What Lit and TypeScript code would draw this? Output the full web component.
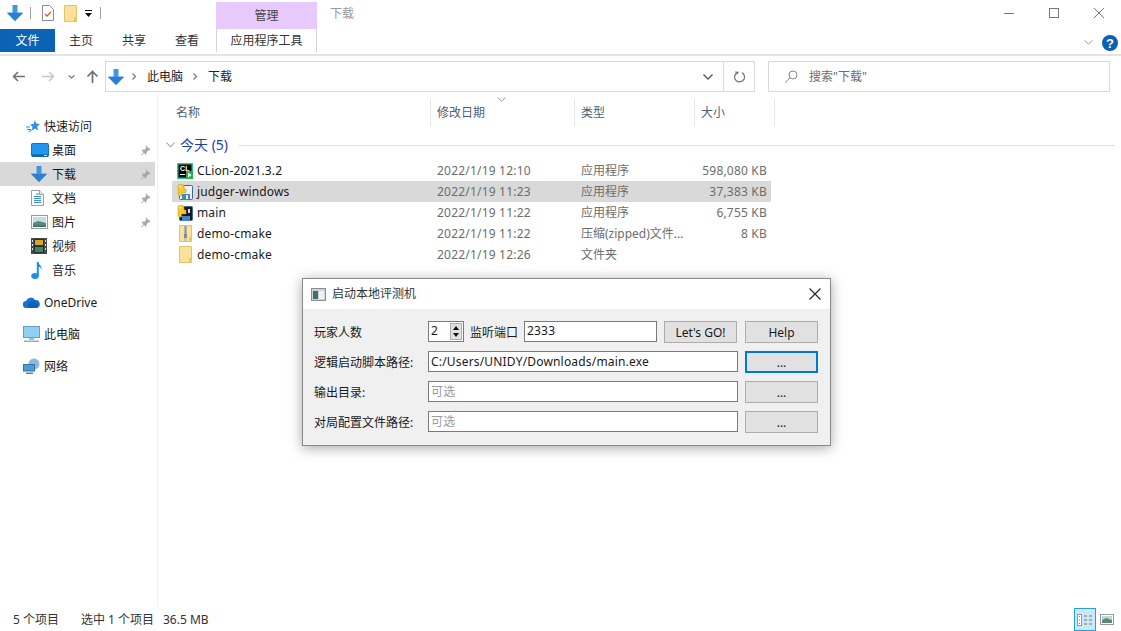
import { LitElement, html, css, svg } from "lit";
import { customElement } from "lit/decorators.js";

const ic = (w: number, h: number, body: unknown, cls = "") =>
  html`<svg class="ic ${cls}" width=${w} height=${h} viewBox="0 0 ${w} ${h}">${body}</svg>`;

const dlArrow = (w = 16, h = 16) => html`<svg class="ic" width=${w} height=${h} viewBox="0 0 16 16"><path d="M5.500 0h5v7.500H16L8 16 0 7.500h5.500z" fill="#3d97e6"/><path d="M8 8h8L8 16 0 8z" fill="#2a7fd0"/></svg>`;
const folder = (zip = false) => ic(13, 17, svg`
  <path d="M.5.5h12v16H.5z" fill="#fbe29a" stroke="#e3c368"/>
  <path d="M10 16v-4h2.500v4z" fill="#f3c64f"/>
  ${zip ? svg`<path d="M5 1h3v15H5z" fill="#c9c9c0"/><path d="M5.500 2h2M5.500 4h2M5.500 6h2M5.500 8h2" stroke="#6e6e68"/><rect x="5" y="9" width="3" height="4" fill="#8b8b84"/>` : ""}`);
const pyBadge = svg`<path d="M1 2a1.500 1.500 0 0 1 1.500-1.500h3A1.500 1.500 0 0 1 7 2v3h2v4H4.500v3H2.500A1.500 1.500 0 0 1 1 10.500z" fill="#f4c92f" stroke="#c89a10" stroke-width=".5"/><circle cx="3" cy="2.800" r=".8" fill="#fff"/>`;
const pin = ic(10, 11, svg`<path d="M4.500 0l5 4.500-1 1-1-.3-2 2 .2 1.600-1 1L3 8 .5 10.500 0 10l2.400-2.600L.8 5.600l1-1 1.600.2 2-2-.4-1z" fill="#a5a9ad"/>`);

const navItems = [
  ["桌面", ic(18, 14, svg`<rect x=".5" y=".5" width="17" height="13" rx="1" fill="#2196ee" stroke="#1670b8"/><path d="M1 11.500h16v2H1z" fill="#0f5d9c"/><path d="M13 12h3v1h-3z" fill="#cfe8fa"/>`), true],
  ["下载", dlArrow(16, 16), true],
  ["文档", ic(13, 16, svg`<path d="M.5.5h8l4 4v11H.5z" fill="#fff" stroke="#9aa0a6"/><path d="M8.500.5v4h4" fill="#e6e9ec" stroke="#9aa0a6"/><path d="M5 4h3M3 6.500h7M3 8.500h7M3 10.500h7M3 12.500h7" stroke="#3f8fd0"/>`), true],
  ["图片", ic(17, 14, svg`<rect x=".5" y=".5" width="16" height="13" fill="#fff" stroke="#9a9a9a"/><rect x="2" y="2" width="13" height="10" fill="#c3dcea"/><path d="M2 8l5-2 8 2v4H2z" fill="#5d8a72"/><path d="M2 10.500h13V12H2z" fill="#3c6e78"/>`), true],
  ["视频", ic(16, 16, svg`<rect width="16" height="16" fill="#43494f"/><rect x="3" y="1" width="10" height="14" fill="#24303a"/><rect x="4" y="2" width="8" height="5" fill="#d9a820"/><rect x="4" y="9" width="8" height="5" fill="#3d8a57"/><path d="M1 2h1v2H1zM1 6h1v2H1zM1 10h1v2H1zM14 2h1v2h-1zM14 6h1v2h-1zM14 10h1v2h-1z" fill="#ddd"/>`), false],
  ["音乐", ic(11, 17, svg`<ellipse cx="4" cy="14" rx="3.800" ry="3" fill="#1f8fe6"/><path d="M5.800 14V0h1.800c.4 3 3.400 3.600 3.200 8-.8-2.400-2-3-3-3.200V14z" fill="#1f8fe6"/>`), false],
] as const;

const files = [
  { name: "CLion-2021.3.2", date: "2022/1/19 12:10", type: "应用程序", size: "598,080 KB", selected: false, icon: ic(16, 16, svg`<rect width="16" height="16" fill="#1fcf8a"/><rect x="1.500" y="1.500" width="13" height="13" fill="#000"/><path d="M3 11h5v1H3z" fill="#fff"/><text x="3" y="8" font-size="7" font-family="Liberation Sans" font-weight="700" fill="#fff">CL</text><path d="M9 8h7v8H9z" fill="#22b14c"/><path d="M11 9.500l3.500 2.500-3.500 2.500z" fill="#fff"/>`) },
  { name: "judger-windows", date: "2022/1/19 11:23", type: "应用程序", size: "37,383 KB", selected: true, icon: ic(16, 16, svg`<rect x="2.500" y="1.500" width="13" height="14" rx="1" fill="#eef2f6" stroke="#3d6a94"/><rect x="5" y="10" width="8" height="6" fill="#3f86c4"/><rect x="9" y="11" width="2" height="4" fill="#eef2f6"/>${pyBadge}`) },
  { name: "main", date: "2022/1/19 11:22", type: "应用程序", size: "6,755 KB", selected: false, icon: ic(16, 16, svg`<rect x="2.500" y="1.500" width="13" height="14" rx="1" fill="#131a24" stroke="#3d6a94"/><rect x="5" y="11" width="8" height="5" fill="#3f86c4"/><path d="M11 4h2v4h-2z" fill="#ddd"/>${pyBadge}`) },
  { name: "demo-cmake", date: "2022/1/19 11:22", type: "压缩(zipped)文件...", size: "8 KB", selected: false, icon: folder(true) },
  { name: "demo-cmake", date: "2022/1/19 12:26", type: "文件夹", size: "", selected: false, icon: folder() },
];

@customElement("app-root")
export class AppRoot extends LitElement {
  static styles = css`
    :host { display: flex; flex-direction: column; position: relative; width: 1121px; height: 631px; overflow: hidden; background: #fff;
      font: 12px/16px "Noto Sans", "Noto Sans CJK SC", sans-serif; color: #1a1a1a; }
    .ic { display: block; flex: none; }
    .title { height: 29px; display: flex; align-items: stretch; flex: none; }
    .qat { width: 216px; flex: none; display: flex; align-items: center; padding: 0 0 3px 7px; box-sizing: border-box; }
    .qsep { width: 1px; height: 12px; background: #a0a0a0; }
    .manage { width: 101px; margin-top: 2px; background: #e8c9fb; display: flex; align-items: center; justify-content: center; color: #444; }
    .wintitle { flex: 1; padding: 6px 0 0 13px; color: #9a9a9a; }
    .winbtns { display: flex; gap: 35px; padding: 8px 17px 0 0; }
    .ribbon { height: 27px; flex: none; display: flex; border-bottom: 2px solid #e4e4e4; align-items: flex-start; box-sizing: border-box; }
    .filetab { width: 55px; height: 23px; padding-top: 1px; box-sizing: border-box; background: #0a63b4; color: #fff; display: flex; align-items: center; justify-content: center; }
    .tab { display: flex; align-items: center; height: 23px; width: 53px; padding: 1px 0 0 14px; box-sizing: border-box; color: #333; }
    .apptab { width: 101px; height: 23px; margin-left: 2px; padding-top: 1px; border: solid #d4d4d4; border-width: 0 1px; box-sizing: border-box; display: flex; align-items: center; justify-content: center; color: #333; }
    .rspace { flex: 1; }
    .rright { display: flex; align-items: center; gap: 9px; height: 24px; padding: 3px 3px 0 0; box-sizing: border-box; }
    .addr { height: 39px; flex: none; display: flex; align-items: flex-start; padding: 5px 11px 0 12px; box-sizing: border-box; }
    .nav { width: 93px; height: 31px; flex: none; display: flex; align-items: center; }
    .abox { width: 650px; flex: none; height: 31px; border: 1px solid #d9d9d9; box-sizing: border-box; display: flex; align-items: center; padding-left: 2px; color: #222; }
    .crumb1 { margin: 0 10px; }
    .crumb2 { margin-left: 10px; }
    .aspace { flex: 1; }
    .achev { width: 30px; display: flex; justify-content: center; }
    .arefresh { width: 30px; align-self: stretch; border-left: 1px solid #d9d9d9; display: flex; align-items: center; justify-content: center; }
    .search { margin-left: 13px; flex: 1; height: 31px; border: 1px solid #d9d9d9; box-sizing: border-box; display: flex; align-items: center; padding-left: 15px; gap: 11px; color: #6d6d6d; }
    .body { flex: 1; display: flex; min-height: 0; }
    .side { width: 158px; flex: none; border-right: 1px solid #f2f2f2; box-sizing: border-box; padding-top: 19px; display: flex; flex-direction: column; }
    .sitem { height: 24px; width: 155px; display: flex; align-items: center; flex: none; position: relative; }
    .sitem span { padding-top: 2px; }
    .sitem.sel { background: #d9d9d9; }
    .sitem.top { padding-left: 26px; box-sizing: border-box; gap: 4px; }
    .sitem.group { margin-top: 8px; padding-left: 23px; box-sizing: border-box; gap: 4px; }
    .sitem.child { padding-left: 31px; box-sizing: border-box; }
    .sico { width: 21px; flex: none; display: flex; justify-content: flex-start; }
    .spin { position: absolute; right: 4px; top: 7px; }
    .main { flex: 1; min-width: 0; display: flex; flex-direction: column; }
    .cols { display: grid; grid-template-columns: 273px 144px 120px 80px; width: 617px; height: 27px; margin-top: 4px; flex: none; color: #4c607a; }
    .col { border-right: 1px solid #e5e5e5; padding: 6px 0 0 6px; position: relative; }
    .col:first-child { padding-left: 18px; }
    .sort { position: absolute; left: 66px; top: -2px; }
    .ghead { display: flex; align-items: center; height: 20px; margin: 9px 6px 0 8px; gap: 5px; color: #1e3f9f; font-size: 14px; flex: none; }
    .gline { flex: 1; height: 1px; background: #e2e2e2; margin-left: 5px; }
    .rows { margin: 5px 0 0 14px; width: 599px; display: flex; flex-direction: column; }
    .row { display: grid; grid-template-columns: 265px 144px 120px 66px; height: 21px; align-items: center; color: #6d6d6d; }
    .row.sel { background: #d9d9d9; }
    .row .fname { display: flex; align-items: center; color: #1a1a1a; padding-left: 5px; gap: 4px; letter-spacing: .15px; }
    .row .ficon { width: 16px; display: flex; justify-content: center; }
    .row .fdate, .row .fsize { letter-spacing: .2px; white-space: nowrap; }
    .row .fsize { text-align: right; }
    .status { height: 24px; flex: none; display: flex; align-items: center; padding-left: 13px; color: #333; }
    .status span { white-space: pre; padding-top: 2px; }
    .s1 { width: 68px; } .s2 { width: 82px; }
    .views { margin-left: auto; display: flex; align-items: center; padding-right: 7px; gap: 4px; align-self: stretch; }
    .vbtn { width: 22px; height: 23px; margin-top: 1px; box-sizing: border-box; border: 1px solid #26a0da; background: #cbe8f6; display: flex; align-items: center; justify-content: center; }

    .dlg { position: absolute; left: 302px; top: 278px; width: 529px; height: 168px; box-sizing: border-box; border: 1px solid #8a8a8a; background: #f0f0f0; box-shadow: 0 2px 12px rgba(0,0,0,.35); display: flex; flex-direction: column; }
    .dtitle { height: 30px; flex: none; background: #fff; display: flex; align-items: center; padding: 0 9px 0 8px; gap: 6px; color: #333; }
    .dtitle .t { flex: 1; }
    .dform { display: grid; grid-template-columns: 107px 310px 73px; column-gap: 7px; row-gap: 8px; padding: 12px 0 0 11px; grid-auto-rows: 22px; }
    .lbl { display: flex; align-items: center; color: #1a1a1a; padding-top: 2px; }
    .inp { height: 21px; border: 1px solid #7a7a7a; background: #fff; box-sizing: border-box; padding: 0 2px; display: flex; align-items: center; color: #1a1a1a; letter-spacing: .18px; }
    .inp.ph { color: #9a9a9a; }
    .frow { display: flex; align-items: flex-start; }
    .spinb { width: 36px; justify-content: space-between; padding: 0 1px 2px 2px; margin-right: 6px; flex: none; }
    .arrows { width: 12px; height: 17px; margin-top: 2px; background: #e1e1e1; border: 1px solid #adadad; box-sizing: border-box; display: flex; flex-direction: column; align-items: center; justify-content: space-around; }
    .flbl { width: 54px; flex: none; height: 21px; display: flex; align-items: center; padding-top: 2px; box-sizing: border-box; }
    .port { width: 133px; flex: none; padding-bottom: 2px; }
    .btn { height: 22px; padding-top: 2px; background: #e1e1e1; border: 1px solid #adadad; box-sizing: border-box; display: flex; align-items: center; justify-content: center; color: #1a1a1a; }
    .btn.go { width: 73px; margin-left: 7px; flex: none; }
    .btn.focus { border: 2px solid #0078d7; }
  `;

  private nav() {
    return html`<div class="nav">
      ${ic(13, 11, svg`<path d="M13 5.500H2M6 1L1.500 5.500 6 10" fill="none" stroke="#707070" stroke-width="1.600"/>`)}
      <div style="width:17px"></div>
      ${ic(13, 11, svg`<path d="M0 5.500h11M7 1l4.500 4.500L7 10" fill="none" stroke="#c8c8c8" stroke-width="1.600"/>`)}
      <div style="width:13px"></div>
      ${ic(7, 4, svg`<path d="M.5.5L3.500 3l3-2.500" fill="none" stroke="#777" stroke-width="1.200"/>`)}
      <div style="width:11px"></div>
      ${ic(13, 13, svg`<path d="M6.500 13V2M1.500 6.500L6.500 1.500l5 5" fill="none" stroke="#707070" stroke-width="1.700"/>`)}
    </div>`;
  }

  render() {
    const chev = ic(5, 7, svg`<path d="M.5.5L3.500 3.500l-3 3" fill="none" stroke="#777" stroke-width="1.200"/>`);
    return html`
      <div class="title">
        <div class="qat">
          ${dlArrow(16, 16)}
          <div style="width:7px"></div><div class="qsep"></div><div style="width:11px"></div>
          ${ic(12, 16, svg`<path d="M.5.5h7l4 4v11H.5z" fill="#fff" stroke="#8c8c8c"/><path d="M3 9l2 2 4-4" fill="none" stroke="#e2562a" stroke-width="1.300"/>`)}
          <div style="width:10px"></div>
          ${ic(13, 17, svg`<path d="M.5.5h12v16H.5z" fill="#fbe29a" stroke="#e3c368"/><path d="M10 16v-4h2.500v4z" fill="#f3c64f"/>`)}
          <div style="width:8px"></div>
          ${ic(7, 7, svg`<path d="M0 0h7v1H0z" fill="#111"/><path d="M0 3h7L3.500 7z" fill="#111"/>`)}
          <div style="width:8px"></div><div class="qsep"></div>
        </div>
        <div class="manage">管理</div>
        <div class="wintitle">下载</div>
        <div class="winbtns">
          ${ic(10, 10, svg`<path d="M0 5.500h10" stroke="#777"/>`)}
          ${ic(10, 10, svg`<rect x=".5" y=".5" width="9" height="9" fill="none" stroke="#777"/>`)}
          ${ic(10, 10, svg`<path d="M0 0l10 10M10 0L0 10" stroke="#777"/>`)}
        </div>
      </div>
      <div class="ribbon">
        <div class="filetab">文件</div>
        <div class="tab">主页</div><div class="tab">共享</div><div class="tab">查看</div>
        <div class="apptab">应用程序工具</div>
        <div class="rspace"></div>
        <div class="rright">
          ${ic(9, 5, svg`<path d="M.5.5L4.500 4l4-3.500" fill="none" stroke="#999"/>`)}
          ${ic(16, 16, svg`<circle cx="8" cy="8" r="8" fill="#0b5fb5"/><text x="8" y="13" text-anchor="middle" font-size="13" font-weight="700" font-family="Liberation Sans" fill="#fff">?</text>`)}
        </div>
      </div>
      <div class="addr">
        ${this.nav()}
        <div class="abox">
          ${dlArrow(16, 16)}
          <div style="width:8px"></div>
          ${chev}
          <span class="crumb1">此电脑</span>
          ${chev}
          <span class="crumb2">下载</span>
          <div class="aspace"></div>
          <div class="achev">${ic(10, 6, svg`<path d="M.5.5L5 5l4.500-4.500" fill="none" stroke="#555" stroke-width="1.300"/>`)}</div>
          <div class="arefresh">${ic(12, 13, svg`<path d="M3.500 3A5 5 0 1 0 9 2.600" fill="none" stroke="#777" stroke-width="1.300"/><path d="M2 .5L6 .8 4 4z" fill="#777" transform="translate(0 1)"/>`)}</div>
        </div>
        <div class="search">
          ${ic(14, 13, svg`<circle cx="9" cy="5" r="4" fill="none" stroke="#8a8a8a"/><path d="M6 8L1 12.500" stroke="#8a8a8a"/>`)}
          <span>搜索"下载"</span>
        </div>
      </div>
      <div class="body">
        <div class="side">
          <div class="sitem top">
            ${ic(14, 13, svg`<path d="M9 0l1.200 3.600L14 4l-2.800 2.600 1 3.900L9 8.500 5.600 10.500l.9-3.700L4 4.400l3.600-.4z" fill="#2f8fe0"/><path d="M0 7h4M1 9.500h4M2.500 12l3-2" stroke="#2f8fe0"/>`)}
            <span>快速访问</span>
          </div>
          ${navItems.map(([name, icon, pinned]) => html`
            <div class="sitem child ${name === "下载" ? "sel" : ""}">
              <div class="sico">${icon}</div><span>${name}</span>
              ${pinned ? html`<div class="spin">${pin}</div>` : ""}
            </div>`)}
          <div class="sitem group">
            ${ic(17, 11, svg`<path d="M3.500 11A3.500 3.500 0 0 1 3 4 5 5 0 0 1 12 3a4 4 0 0 1 1.500 8z" fill="#1476d2"/><path d="M6 11a3 3 0 0 1 1-5.500 3.500 3.500 0 0 1 6 .5 2.600 2.600 0 0 1 .5 5z" fill="#0d5fb8"/>`)}
            <span>OneDrive</span>
          </div>
          <div class="sitem group">
            ${ic(17, 16, svg`<rect x=".5" y=".5" width="16" height="11" fill="#8fd0f5" stroke="#6f9dbd"/><path d="M6 12h5v2H6z" fill="#a9c0d0"/><path d="M1 14.500h15v1.500H1z" fill="#96aec0"/>`)}
            <span>此电脑</span>
          </div>
          <div class="sitem group">
            ${ic(17, 16, svg`<circle cx="11" cy="6" r="5.500" fill="#8db9de"/><rect x=".5" y="6.500" width="11" height="6.500" fill="#4a9ddc" stroke="#3b6f98"/><path d="M3 14.500h7V16H3z" fill="#5f7f99"/>`)}
            <span>网络</span>
          </div>
        </div>
        <div class="main">
          <div class="cols">
            <div class="col">名称</div>
            <div class="col">修改日期<div class="sort">${ic(9, 5, svg`<path d="M.5.5L4.500 4l4-3.500" fill="none" stroke="#999"/>`)}</div></div>
            <div class="col">类型</div>
            <div class="col">大小</div>
          </div>
          <div class="ghead">
            ${ic(9, 6, svg`<path d="M.5.5L4.500 5l4-4.500" fill="none" stroke="#888"/>`)}
            <span>今天 (5)</span><div class="gline"></div>
          </div>
          <div class="rows">
            ${files.map((f) => html`
              <div class="row ${f.selected ? "sel" : ""}">
                <div class="fname"><div class="ficon">${f.icon}</div><span>${f.name}</span></div>
                <div class="fdate">${f.date}</div><div>${f.type}</div><div class="fsize">${f.size}</div>
              </div>`)}
          </div>
        </div>
      </div>
      <div class="status">
        <span class="s1">5 个项目</span><span class="s2">选中 1 个项目</span><span>36.5 MB</span>
        <div class="views">
          <div class="vbtn">${ic(16, 12, svg`<rect x=".5" y=".5" width="4" height="11" fill="#fff" stroke="#999"/><path d="M2 2h1v1H2z" fill="#4a8"/><path d="M2 5.500h1v1H2z" fill="#48c"/><path d="M2 9h1v1H2z" fill="#c44"/><path d="M7 2h3M12 2h3M7 6h3M12 6h3M7 10h3M12 10h3" stroke="#777"/>`)}</div>
          ${ic(14, 11, svg`<rect x=".5" y=".5" width="13" height="10" fill="#fff" stroke="#999"/><rect x="2" y="2" width="10" height="7" fill="#bcd6e6"/><path d="M2 6l4-2 6 2v3H2z" fill="#5d8a72"/>`)}
        </div>
      </div>

      <div class="dlg">
        <div class="dtitle">
          ${ic(15, 13, svg`<rect x=".5" y=".5" width="14" height="12" fill="#cfd3d6" stroke="#8a8f93"/><rect x="2" y="3" width="5" height="8" fill="#3f6f72"/><rect x="8" y="3" width="5" height="8" fill="#eef2f5"/>`)}
          <span class="t">启动本地评测机</span>
          ${ic(12, 12, svg`<path d="M.5.5l11 11M11.500.5l-11 11" stroke="#222" stroke-width="1.100"/>`)}
        </div>
        <div class="dform">
          <div class="lbl">玩家人数</div>
          <div class="frow">
            <div class="inp spinb"><span>2</span><div class="arrows">
              ${ic(6, 4, svg`<path d="M3 0l3 4H0z" fill="#111"/>`)}${ic(6, 4, svg`<path d="M0 0h6L3 4z" fill="#111"/>`)}
            </div></div>
            <div class="flbl">监听端口</div>
            <div class="inp port">2333</div>
            <div class="btn go">Let's GO!</div>
          </div>
          <div class="btn">Help</div>
          <div class="lbl">逻辑启动脚本路径:</div>
          <div class="inp">C:/Users/UNIDY/Downloads/main.exe</div>
          <div class="btn focus">...</div>
          <div class="lbl">输出目录:</div>
          <div class="inp ph">可选</div>
          <div class="btn">...</div>
          <div class="lbl">对局配置文件路径:</div>
          <div class="inp ph">可选</div>
          <div class="btn">...</div>
        </div>
      </div>
    `;
  }
}
